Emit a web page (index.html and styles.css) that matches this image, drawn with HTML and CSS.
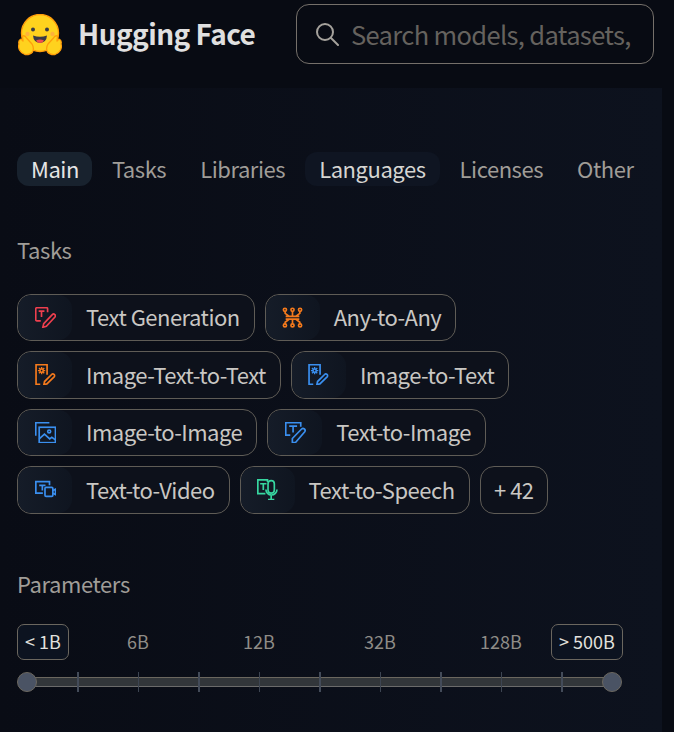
FILE: index.html
```html
<!DOCTYPE html>
<html lang="en">
<head>
    <meta charset="UTF-8">
    <meta name="viewport" content="width=device-width, initial-scale=1.0">
    <title>Hugging Face</title>
    <link rel="stylesheet" href="styles.css">
</head>
<body>

<header class="header">
    <a class="brand" href="#">
        <svg class="brand-logo" viewBox="0 0 44 42" aria-hidden="true">
            <circle cx="22" cy="19" r="18.5" fill="#ffd21e" stroke="#ff9d0b" stroke-width="1.4"/>
            <circle cx="15" cy="15.5" r="2" fill="#3a3b45"/>
            <circle cx="29" cy="15.5" r="2" fill="#3a3b45"/>
            <circle cx="9.5" cy="20" r="2.2" fill="#ffb13a"/>
            <circle cx="34.5" cy="20" r="2.2" fill="#ffb13a"/>
            <path d="M15 21.5 Q22 24 29 21.5 Q28.500 28.500 22 29 Q15.500 28.500 15 21.500Z" fill="#3a3b45"/>
            <path d="M18 26.500 Q22 24.500 26 26.500 Q24.500 29 22 29 Q19.500 29 18 26.500Z" fill="#ef4e4e"/>
            <path d="M1 30 Q0 26 3 25 L5 27 L4.500 22 Q7 21 8.500 24 L14 30 Q16.500 34 14.500 38 Q12 41 7 40.500 Q3 39 1.500 36 Q0 33 1 30Z" fill="#ffd21e" stroke="#ff9d0b" stroke-width="1.300" stroke-linejoin="round"/>
            <path d="M43 30 Q44 26 41 25 L39 27 L39.500 22 Q37 21 35.500 24 L30 30 Q27.500 34 29.500 38 Q32 41 37 40.500 Q41 39 42.500 36 Q44 33 43 30Z" fill="#ffd21e" stroke="#ff9d0b" stroke-width="1.300" stroke-linejoin="round"/>
        </svg>
        <span class="brand-name">Hugging Face</span>
    </a>
    <div class="search">
        <svg class="search-icon" viewBox="0 0 24 24" aria-hidden="true">
            <circle cx="10" cy="10" r="8"/>
            <path d="M16 16 L23 23"/>
        </svg>
        <input class="search-input" type="text" placeholder="Search models, datasets, users...">
    </div>
</header>

<main class="panel">
    <nav class="tabs">
        <a class="tab tab-active" href="#">Main</a>
        <a class="tab" href="#">Tasks</a>
        <a class="tab" href="#">Libraries</a>
        <a class="tab tab-hover" href="#">Languages</a>
        <a class="tab" href="#">Licenses</a>
        <a class="tab" href="#">Other</a>
    </nav>

    <h3 class="section-title">Tasks</h3>
    <div class="chips">
        <a class="chip" href="#">
            <span class="chip-icon red">
                <svg viewBox="0 0 20 20"><path d="M5.500 13.200H1.700a1 1 0 0 1-1-1V1.700a1 1 0 0 1 1-1h9.300a1 1 0 0 1 1 1V5"/><path d="M3.500 4h5.500M6.200 4v5.500"/><path d="M7.500 19.300l.8-3.500 8.200-8.600a1.700 1.700 0 0 1 2.500 2.300l-8.200 8.800z"/></svg>
            </span>
            <span class="chip-label">Text Generation</span>
        </a>
        <a class="chip" href="#">
            <span class="chip-icon orange">
                <svg viewBox="0 0 20 20"><path d="M3.500 9h13M3.500 11.500h13M7 9L3 6V4M13 9l4-3V4M10 9V4M7 11.500L3 14.500v1.500M13 11.500l4 3v1.500M10 11.500V16"/><circle cx="2.800" cy="2.700" r="1.500"/><circle cx="10" cy="2.700" r="1.500"/><circle cx="17.200" cy="2.700" r="1.500"/><circle cx="2.800" cy="17.500" r="1.500"/><circle cx="10" cy="17.500" r="1.500"/><circle cx="17.200" cy="17.500" r="1.500"/></svg>
            </span>
            <span class="chip-label">Any-to-Any</span>
        </a>
        <a class="chip" href="#">
            <span class="chip-icon orange">
                <svg viewBox="0 0 20 20"><path d="M5 19.300H1V.700h10.500v9.500"/><path class="gear" d="M6.300 2.800v7M2.800 6.300h7M3.800 3.800l5 5M8.800 3.800l-5 5"/><circle class="solid" cx="6.300" cy="6.300" r="2.200"/><circle class="gear-hole" cx="6.300" cy="6.300" r=".8"/><path d="M8.500 19.500l.6-2.800 6.700-6.700a1.600 1.600 0 0 1 2.400 2.200l-6.900 6.800z"/></svg>
            </span>
            <span class="chip-label">Image-Text-to-Text</span>
        </a>
        <a class="chip" href="#">
            <span class="chip-icon blue">
                <svg viewBox="0 0 20 20"><path d="M5 19.300H1V.700h10.500v9.500"/><path class="gear" d="M6.300 2.800v7M2.800 6.300h7M3.800 3.800l5 5M8.800 3.800l-5 5"/><circle class="solid" cx="6.300" cy="6.300" r="2.200"/><circle class="gear-hole" cx="6.300" cy="6.300" r=".8"/><path d="M8.500 19.500l.6-2.800 6.700-6.700a1.600 1.600 0 0 1 2.400 2.200l-6.900 6.800z"/></svg>
            </span>
            <span class="chip-label">Image-to-Text</span>
        </a>
        <a class="chip" href="#">
            <span class="chip-icon blue">
                <svg viewBox="0 0 20 20"><path d="M.700 13V.700h13"/><rect x="4" y="5" width="15.500" height="14.700"/><circle cx="13.500" cy="9" r="1.400"/><path d="M4 16l5-4.500 5 4.500 2-1.500 3.500 2.500"/></svg>
            </span>
            <span class="chip-label">Image-to-Image</span>
        </a>
        <a class="chip" href="#">
            <span class="chip-icon blue">
                <svg viewBox="0 0 20 20"><path d="M5 12.500H.700V.700h14.300v3.800"/><path d="M4 4h7.500M7.700 4v6"/><path d="M7 19.500v-3.800l8.800-9a2 2 0 0 1 3 2.600l-8.800 10.200z"/></svg>
            </span>
            <span class="chip-label">Text-to-Image</span>
        </a>
        <a class="chip" href="#">
            <span class="chip-icon blue">
                <svg viewBox="0 0 20 20"><path d="M7.500 13.500H.800V2.500h13V6"/><path d="M4 6h6M7 6v5"/><rect x="9.500" y="8" width="7.500" height="8.500" rx="1"/><path d="M17 11l2.500-1.300v5.100L17 13.500"/></svg>
            </span>
            <span class="chip-label">Text-to-Video</span>
        </a>
        <a class="chip" href="#">
            <span class="chip-icon green">
                <svg viewBox="0 0 20 20"><path d="M8 14H.800V.800H10v2"/><path d="M3 4.500h6M6 4.500v6"/><rect x="10.500" y="1.500" width="6" height="12" rx="3"/><path d="M8.500 10a5 5 0 0 0 10.500 0M13.500 15.500v4M10.500 19.500h6"/></svg>
            </span>
            <span class="chip-label">Text-to-Speech</span>
        </a>
        <a class="chip chip-more" href="#"><span class="chip-label">+ 42</span></a>
    </div>

    <h3 class="section-title section-params">Parameters</h3>
    <div class="scale">
        <span class="scale-box">&lt; 1B</span>
        <span class="scale-label">6B</span>
        <span class="scale-label">12B</span>
        <span class="scale-label">32B</span>
        <span class="scale-label">128B</span>
        <span class="scale-box scale-box-end">&gt; 500B</span>
    </div>
    <div class="slider">
        <div class="slider-track"></div>
        <div class="slider-ticks">
            <i class="tick tick-thick"></i>
            <i class="tick"></i>
            <i class="tick tick-thick"></i>
            <i class="tick"></i>
            <i class="tick tick-thick"></i>
            <i class="tick"></i>
            <i class="tick tick-thick"></i>
            <i class="tick"></i>
            <i class="tick tick-thick"></i>
        </div>
        <span class="thumb thumb-left"></span>
        <span class="thumb thumb-right"></span>
    </div>
</main>

</body>
</html>
```
FILE: styles.css
```css
html, body {
    height: 100%;
}
body {
    margin: 0;
    overflow: hidden;
    background-color: #080b13;
    font-family: "Noto Sans CJK SC", "Noto Sans", sans-serif;
}
a {
    text-decoration: none;
    color: inherit;
}

.header {
    display: flex;
    height: 88px;
    box-sizing: border-box;
    padding: 4px 0 0 18px;
}
.brand {
    display: flex;
    align-items: center;
    height: 58px;
    width: 278px;
}
.brand-logo {
    width: 44px;
    height: 42px;
    margin-top: 4px;
    flex-shrink: 0;
}
.brand-name {
    margin-left: 16px;
    font-size: 28px;
    font-weight: 700;
    letter-spacing: -0.55px;
    color: #e0e0e0;
}
.search {
    display: flex;
    align-items: center;
    width: 358px;
    height: 60px;
    box-sizing: border-box;
    padding-left: 18px;
    border: 1px solid #75706a;
    border-radius: 13px;
}
.search-icon {
    width: 24px;
    height: 24px;
    flex-shrink: 0;
    fill: none;
    stroke: #a5a29c;
    stroke-width: 2;
    stroke-linecap: round;
}
.search-input {
    flex: 1;
    min-width: 0;
    margin: 0 16px 2px 12px;
    padding: 0;
    border: none;
    outline: none;
    background: transparent;
    font-family: inherit;
    font-size: 25.5px;
    letter-spacing: -0.65px;
}
.search-input::placeholder {
    color: #65625e;
    opacity: 1;
}

.panel {
    width: 662px;
    height: 644px;
    box-sizing: border-box;
    padding: 64px 0 0 17px;
    background: linear-gradient(to right, #090c15, #0d121e);
}

.tabs {
    display: flex;
    gap: 6px;
}
.tab {
    height: 34px;
    line-height: 32px;
    padding: 0 14px;
    border-radius: 12px;
    font-size: 22px;
    letter-spacing: -0.45px;
    color: #a09d98;
}
.tab-active {
    padding-right: 13px;
    background-color: #18222e;
    color: #e5e5e5;
}
.tab-hover {
    background-color: #0f1522;
    color: #d6d5d2;
}

.section-title {
    margin: 46px 0 0;
    height: 34px;
    line-height: 34px;
    font-size: 22px;
    font-weight: 400;
    letter-spacing: -0.4px;
    color: #a09d98;
}
.section-params {
    margin-top: 52.4px;
}

.chips {
    display: flex;
    flex-wrap: wrap;
    gap: 10px;
    width: 606px;
    margin-top: 27.6px;
}
.chip {
    display: flex;
    align-items: center;
    height: 47.5px;
    box-sizing: border-box;
    padding-right: 14px;
    border: 1px solid #5f5c56;
    border-radius: 14px;
    background-color: #0d111b;
    font-size: 22px;
    letter-spacing: -0.5px;
    color: #c9c7c3;
    white-space: nowrap;
}
.chip-label {
    margin-bottom: 2px;
}
.chip-more {
    padding: 0 13.5px;
}
.chip-icon {
    display: flex;
    align-items: center;
    justify-content: center;
    width: 54px;
    height: 100%;
    margin-right: 14px;
    border-radius: 14px;
    background: linear-gradient(to right, #151c28, #0f1520);
}
.chip-icon svg {
    width: 21px;
    height: 21px;
    fill: none;
    stroke: currentColor;
    stroke-width: 1.600;
}
.chip-icon svg .solid {
    fill: currentColor;
    stroke: none;
}
.chip-icon svg .gear {
    stroke-width: 1.300;
}
.chip-icon svg .gear-hole {
    fill: #121824;
    stroke: none;
}
.red { color: #ee3f4e; }
.orange { color: #f57a1c; }
.blue { color: #3a8fef; }
.green { color: #37d6a0; }

.scale {
    display: grid;
    grid-template-columns: 60.500px repeat(4, 121px) 61.500px;
    align-items: center;
    width: 606px;
    margin-top: 24px;
}
.scale-box {
    width: 52px;
    height: 36px;
    line-height: 33px;
    box-sizing: border-box;
    border: 1px solid #6b675f;
    border-radius: 7px;
    background-color: #0c1320;
    text-align: center;
    font-size: 18px;
    color: #e2e1de;
}
.scale-box-end {
    width: 72px;
    justify-self: end;
}
.scale-label {
    padding-bottom: 2px;
    text-align: center;
    font-size: 18px;
    color: #8f8c87;
}

.slider {
    position: relative;
    width: 605px;
    height: 20px;
    margin-top: 12px;
}
.slider-track {
    position: absolute;
    top: 5px;
    left: 10px;
    right: 10px;
    height: 10px;
    box-sizing: border-box;
    border-top: 1px solid #6b675f;
    border-bottom: 1px solid #6b6b6b;
    background-color: #32363a;
}
.slider-ticks {
    position: absolute;
    top: 0;
    left: 60px;
    right: 59px;
    height: 20px;
    display: flex;
    justify-content: space-between;
}
.tick {
    width: 1px;
    background-color: #3d4552;
}
.tick-thick {
    width: 2px;
    background-color: #434b59;
}
.thumb {
    position: absolute;
    top: 0;
    width: 20px;
    height: 20px;
    box-sizing: border-box;
    border: 1px solid #6b675f;
    border-radius: 50%;
    background-color: #4a5364;
}
.thumb-left { left: 0; }
.thumb-right { right: 0; }
```
